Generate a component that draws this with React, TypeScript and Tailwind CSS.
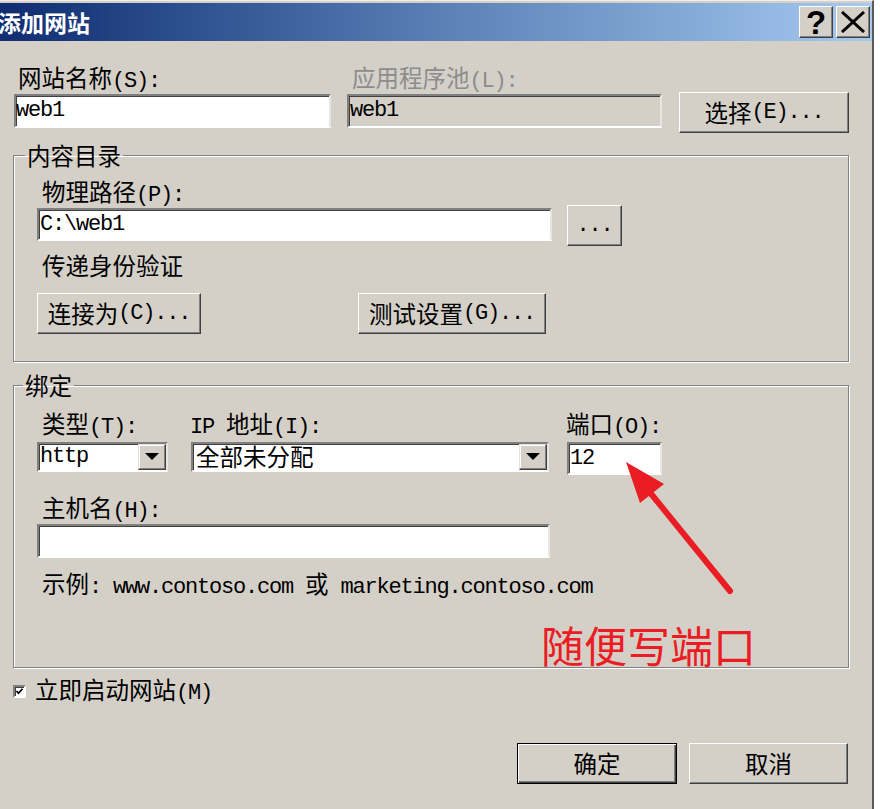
import React from "react";

const CJK = /([\u2e80-\u9fff\uff00-\uffef]+)/;

function T({ s }: { s: string }) {
  return (
    <>
      {s.split(CJK).map((p, i) =>
        p === "" ? null : CJK.test(p) ? (
          <span key={i} className="text-[23.5px] font-['Noto_Sans_CJK_SC',sans-serif]">
            {p}
          </span>
        ) : (
          <span key={i} className="text-[22px] tracking-[-1.2px] font-['Liberation_Mono',monospace] whitespace-pre">
            {p}
          </span>
        )
      )}
    </>
  );
}

function Field({ className = "", children }: { className?: string; children?: React.ReactNode }) {
  return (
    <div
      className={`flex items-center border-2 border-t-[#808080] border-l-[#808080] border-b-white border-r-[#e8e6e1] shadow-[inset_1px_1px_0_#404040] leading-none ${className}`}
    >
      {children}
    </div>
  );
}

function Btn({ className = "", children }: { className?: string; children?: React.ReactNode }) {
  return (
    <button
      className={`flex items-center justify-center bg-[#d4d0c8] border border-t-white border-l-white border-b-[#404040] border-r-[#404040] shadow-[inset_-1px_-1px_0_#808080] leading-none text-black ${className}`}
    >
      {children}
    </button>
  );
}

function DropBtn() {
  return (
    <div className="w-[28px] h-full flex items-center justify-center bg-[#d4d0c8] border border-t-[#e4e2dc] border-l-[#e4e2dc] border-b-[#404040] border-r-[#404040] shadow-[inset_-1px_-1px_0_#808080,inset_1px_1px_0_#fff]">
      <svg width="14" height="8" viewBox="0 0 14 8">
        <polygon points="0,0 14,0 7,7" fill="#000" />
      </svg>
    </div>
  );
}

function Label({ s, className = "" }: { s: string; className?: string }) {
  return <div className={`h-[26px] leading-[26px] whitespace-nowrap ${className}`}><T s={s} /></div>;
}

export default function App() {
  return (
    <div className="w-[880px] h-[809px] bg-white overflow-hidden">
      <div className="relative w-[874px] h-[809px] bg-[#d4d0c8] border-r-2 border-[#5a5a5a] text-black border-t border-t-[#f0efeb] pt-[2px]">
        {/* title bar */}
        <div className="h-[38px] flex items-center bg-linear-to-r from-[#102c72] via-[#5a7fb5] to-[#a6caf0]">
          <div className="ml-[-2px] flex-1 text-white font-bold text-[23px] leading-none font-['Noto_Sans_CJK_SC',sans-serif]">
            添加网站
          </div>
          <Btn className="w-[34px] h-[32px] mr-[3px]">
            <span className="font-['Liberation_Sans',sans-serif] font-bold text-[33px] leading-none">?</span>
          </Btn>
          <Btn className="w-[34px] h-[32px] mr-[2px]">
            <svg width="26" height="22" viewBox="0 0 26 22">
              <line x1="2" y1="1" x2="24" y2="21" stroke="#000" strokeWidth="3" />
              <line x1="24" y1="1" x2="2" y2="21" stroke="#000" strokeWidth="3" />
            </svg>
          </Btn>
        </div>

        {/* row 1 */}
        <div className="flex items-end mt-[23px] ml-[14px]">
          <div className="w-[317px]">
            <Label s="网站名称(S):" className="pl-[4px]" />
            <Field className="mt-[4px] h-[34px] bg-white">
              <T s="web1" />
            </Field>
          </div>
          <div className="ml-[16px] w-[315px]">
            <Label s="应用程序池(L):" className="pl-[5px] text-[#8c8c8c]" />
            <Field className="mt-[4px] h-[34px] bg-[#d4d0c8] pl-[1px]">
              <T s="web1" />
            </Field>
          </div>
          <Btn className="ml-[17px] w-[170px] h-[41px] mb-[-5px]">
            <T s="选择(E)..." />
          </Btn>
        </div>

        {/* 内容目录 */}
        <fieldset className="mt-[14px] ml-[13px] w-[836px] border border-[#808080] shadow-[1px_1px_0_#fff,inset_1px_1px_0_#fff] pl-[23px] pb-[27px]">
          <legend className="ml-[-12px] px-[2px] h-[26px] leading-[26px]">
            <T s="内容目录" />
          </legend>
          <Label s="物理路径(P):" className="mt-[10px] pl-[5px]" />
          <div className="flex items-start mt-[1px]">
            <Field className="mt-[3px] w-[515px] h-[33px] bg-white pl-[1px]">
              <T s="C:\web1" />
            </Field>
            <Btn className="ml-[15px] w-[55px] h-[41px]">
              <T s="..." />
            </Btn>
          </div>
          <Label s="传递身份验证" className="mt-[6px] pl-[5px]" />
          <div className="flex mt-[15px]">
            <Btn className="w-[164px] h-[41px]">
              <T s="连接为(C)..." />
            </Btn>
            <Btn className="ml-[157px] w-[188px] h-[41px]">
              <T s="测试设置(G)..." />
            </Btn>
          </div>
        </fieldset>

        {/* 绑定 */}
        <fieldset className="mt-[10px] ml-[13px] w-[836px] border border-[#808080] shadow-[1px_1px_0_#fff,inset_1px_1px_0_#fff] pl-[23px] pb-[71px]">
          <legend className="ml-[-14px] px-[2px] h-[26px] leading-[26px]">
            <T s="绑定" />
          </legend>
          <div className="flex items-start mt-[12px]">
            <div className="w-[131px]">
              <Label s="类型(T):" className="pl-[5px]" />
              <Field className="mt-[6px] h-[30px] bg-white">
                <div className="flex-1 pl-[1px]">
                  <T s="http" />
                </div>
                <DropBtn />
              </Field>
            </div>
            <div className="ml-[23px] w-[358px]">
              <Label s="IP 地址(I):" className="ml-[-1px]" />
              <Field className="mt-[6px] h-[30px] bg-white">
                <div className="flex-1 pl-[3px]">
                  <T s="全部未分配" />
                </div>
                <DropBtn />
              </Field>
            </div>
            <div className="ml-[18px] w-[95px]">
              <Label s="端口(O):" className="ml-[-1px]" />
              <Field className="mt-[6px] h-[33px] bg-white pl-[1px]">
                <T s="12" />
              </Field>
            </div>
          </div>
          <Label s="主机名(H):" className="mt-[19px] pl-[5px]" />
          <Field className="mt-[4px] w-[513px] h-[34px] bg-white" />
          <Label s="示例: www.contoso.com 或 marketing.contoso.com" className="mt-[12px] pl-[5px]" />
        </fieldset>

        {/* checkbox */}
        <div className="flex items-center h-[26px] mt-[10px] ml-[13px]">
          <div className="w-[13px] h-[13px] bg-white border-2 border-t-[#808080] border-l-[#808080] border-b-white border-r-white shadow-[inset_1px_1px_0_#404040] flex items-center justify-center">
            <svg width="9" height="9" viewBox="0 0 9 9">
              <polyline points="1.5,4 3.5,6.3 7.5,1.8" fill="none" stroke="#000" strokeWidth="1.7" />
            </svg>
          </div>
          <div className="ml-[9px] leading-[26px] whitespace-nowrap">
            <T s="立即启动网站(M)" />
          </div>
        </div>

        {/* dialog buttons */}
        <div className="flex justify-end mt-[39px] pr-[24px]">
          <button className="w-[160px] h-[41px] flex items-center justify-center bg-[#d4d0c8] border border-black shadow-[inset_1px_1px_0_#fff,inset_-1px_-1px_0_#404040,inset_-2px_-2px_0_#808080] leading-none">
            <T s="确定" />
          </button>
          <Btn className="ml-[12px] w-[159px] h-[41px]">
            <T s="取消" />
          </Btn>
        </div>

        {/* annotation */}
        <svg className="absolute left-[600px] top-[440px] pointer-events-none" width="150" height="170" viewBox="0 0 150 170">
          <line x1="48" y1="49" x2="130" y2="150" stroke="#ea1c24" strokeWidth="6" strokeLinecap="round" />
          <polygon points="26,21 64,43 40,62" fill="#ea1c24" />
        </svg>
        <div className="absolute left-[541px] top-[622px] text-[43px] leading-none text-[#ec1c24] font-['Noto_Sans_CJK_SC',sans-serif] whitespace-nowrap">
          随便写端口
        </div>
      </div>
    </div>
  );
}
